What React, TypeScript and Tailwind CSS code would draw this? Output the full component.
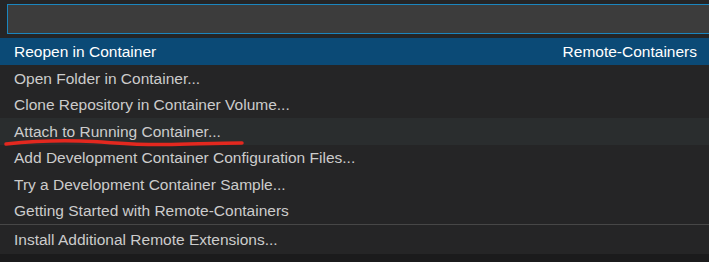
const rows = [
  "Open Folder in Container...",
  "Clone Repository in Container Volume...",
  "Attach to Running Container...",
  "Add Development Container Configuration Files...",
  "Try a Development Container Sample...",
  "Getting Started with Remote-Containers",
];

const App = () => {
  return (
    <div
      className="w-[709px] h-[262px] overflow-hidden bg-[#252526] text-[#cccccc] text-[15.5px]"
      style={{ fontFamily: '"Liberation Sans", Arial, sans-serif' }}
    >
      <div className="pl-[7px] pt-[4px] pb-[4px]">
        <div className="h-[30px] -mr-4 bg-[#3c3c3c] border border-[#1b86bf]" />
      </div>

      <div className="flex items-center justify-between h-[27px] px-[14px] bg-[#0b4a76] text-white">
        <span>Reopen in Container</span>
        <span className="mr-[-2px]">Remote-Containers</span>
      </div>

      {rows.map((label, i) => (
        <div
          key={label}
          className={
            i === 2
              ? "relative flex items-center h-[26.5px] px-[14px] bg-[#2a2d2e]"
              : "flex items-center h-[26.5px] px-[14px]"
          }
        >
          <span>{label}</span>
          {i === 2 && (
            <svg
              className="absolute left-0 top-[18px]"
              width="250"
              height="14"
              viewBox="0 0 250 14"
            >
              <path
                d="M6 8 C 25 6, 50 4, 80 5 C 110 6, 130 9, 165 8.5 C 195 8, 220 7, 242 7"
                stroke="#e3281f"
                strokeWidth="3.5"
                strokeLinecap="round"
                fill="none"
              />
            </svg>
          )}
        </div>
      ))}

      <div className="border-t border-[#474747] flex items-center h-[30px] px-[14px]">
        Install Additional Remote Extensions...
      </div>
      <div className="h-[10px] bg-[#1b1b1c]" />
    </div>
  );
};

export default App;
